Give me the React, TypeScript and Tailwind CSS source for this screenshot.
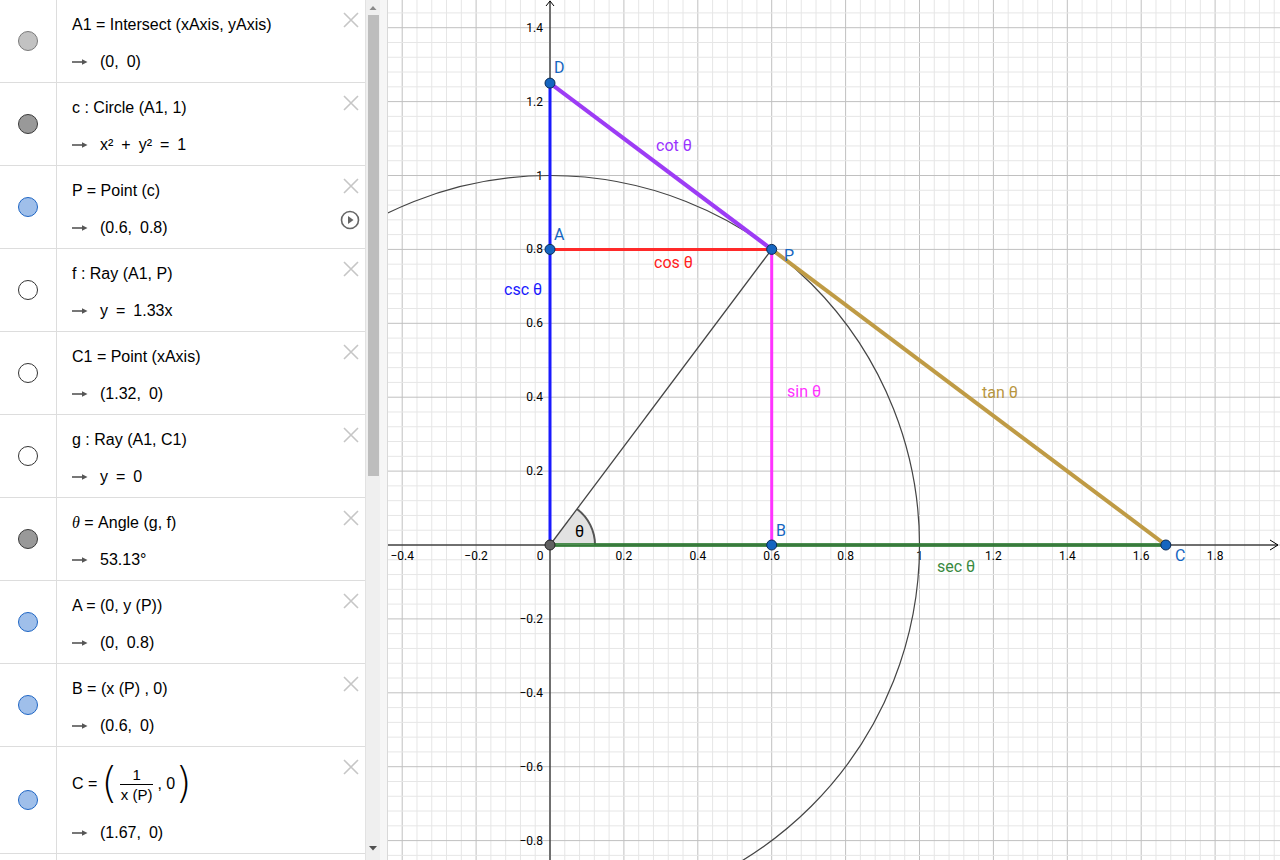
import type { ReactNode } from 'react';

const S = 369.5;
const OX = 162;
const OY = 545;
const X = (v: number) => OX + v * S;
const Y = (v: number) => OY - v * S;

const SANS = "'Liberation Sans', Arial, sans-serif";
const E = '\u2002';

type Dot = 'light' | 'dark' | 'blue' | 'empty';

const DOT_CLASS: Record<Dot, string> = {
  light: 'bg-[#c2c2c2] border-[#7a7a7a]',
  dark: 'bg-[#999999] border-[#3a3a3a]',
  blue: 'bg-[#9fbfea] border-[#1f66c4]',
  empty: 'bg-white border-[#333333]',
};

function CloseIcon() {
  return (
    <svg width="16" height="16" viewBox="0 0 16 16" className="absolute left-[343px] top-[12px]">
      <path d="M1 1 L15 15 M15 1 L1 15" stroke="#c6c6c6" strokeWidth="1.6" fill="none" />
    </svg>
  );
}

function PlayIcon() {
  return (
    <svg width="20" height="20" viewBox="0 0 20 20" className="absolute left-[340px] top-[44px]">
      <circle cx="10" cy="10" r="8.5" stroke="#666" strokeWidth="1.6" fill="none" />
      <path d="M8 6 L13.5 10 L8 14 Z" fill="#666" />
    </svg>
  );
}

function Arrow() {
  return (
    <svg width="16" height="10" viewBox="0 0 16 10" className="mr-[12px] shrink-0">
      <path d="M0 5 L12 5" stroke="#555" strokeWidth="1.6" />
      <path d="M10 2.2 L15.5 5 L10 7.8 Z" fill="#555" />
    </svg>
  );
}

function Row({ dot, def, val, tall, play }: {
  dot: Dot;
  def: ReactNode;
  val: ReactNode;
  tall?: boolean;
  play?: boolean;
}) {
  return (
    <div className={`relative flex shrink-0 border-b border-[#dddddd] ${tall ? 'h-[107px]' : 'h-[83px]'}`}>
      <div className="flex w-[57px] shrink-0 items-center justify-center border-r border-[#dddddd]">
        <div className={`h-[20px] w-[20px] rounded-full border ${DOT_CLASS[dot]}`} />
      </div>
      <div className="flex flex-col pl-[15px] text-[16px] text-black" style={{ fontFamily: SANS }}>
        {tall ? (
          <div className="mt-[14px] flex h-[46px] items-center">{def}</div>
        ) : (
          <div className="mt-[14px] flex h-[22px] items-center whitespace-pre leading-[22px]">{def}</div>
        )}
        <div className="mt-[15px] flex h-[22px] items-center whitespace-pre leading-[22px]">
          <Arrow />
          {val}
        </div>
      </div>
      <CloseIcon />
      {play && <PlayIcon />}
    </div>
  );
}

const Th = () => (
  <span className="italic" style={{ fontFamily: "'Liberation Serif', serif" }}>θ</span>
);

function AlgebraView() {
  return (
    <div className="flex h-full w-[365px] shrink-0 flex-col">
      <Row dot="light" def={<span>A1 = Intersect (xAxis, yAxis)</span>} val={<span>{`(0,${E}0)`}</span>} />
      <Row dot="dark" def={<span>c : Circle (A1, 1)</span>} val={<span>{`x²${E}+${E}y²${E}=${E}1`}</span>} />
      <Row dot="blue" def={<span>P = Point (c)</span>} val={<span>{`(0.6,${E}0.8)`}</span>} play />
      <Row dot="empty" def={<span>f : Ray (A1, P)</span>} val={<span>{`y${E}=${E}1.33x`}</span>} />
      <Row dot="empty" def={<span>C1 = Point (xAxis)</span>} val={<span>{`(1.32,${E}0)`}</span>} />
      <Row dot="empty" def={<span>g : Ray (A1, C1)</span>} val={<span>{`y${E}=${E}0`}</span>} />
      <Row dot="dark" def={<span><Th /> = Angle (g, f)</span>} val={<span>53.13°</span>} />
      <Row dot="blue" def={<span>A = (0, y (P))</span>} val={<span>{`(0,${E}0.8)`}</span>} />
      <Row dot="blue" def={<span>B = (x (P) , 0)</span>} val={<span>{`(0.6,${E}0)`}</span>} />
      <Row
        dot="blue"
        tall
        def={
          <span className="flex items-center">
            <span className="mr-[4px]">C =</span>
            <span className="text-[42px] font-extralight leading-none" style={{ fontFamily: "'DejaVu Sans', sans-serif" }}>(</span>
            <span className="mx-[2px] flex flex-col items-center text-[15px] leading-[19px]">
              <span>1</span>
              <span className="border-t border-black px-[1px]">x (P)</span>
            </span>
            <span className="ml-[2px]">, 0</span>
            <span className="text-[42px] font-extralight leading-none" style={{ fontFamily: "'DejaVu Sans', sans-serif" }}>)</span>
          </span>
        }
        val={<span>{`(1.67,${E}0)`}</span>}
      />
      <div className="flex flex-1">
        <div className="w-[57px] border-r border-[#dddddd]" />
      </div>
    </div>
  );
}

function Scrollbar() {
  return (
    <div className="flex h-full w-[15px] shrink-0 flex-col items-center border-l border-[#e2e2e2] bg-[#efefef]">
      <svg width="10" height="15" viewBox="0 0 10 15">
        <path d="M1.5 10 L5 6 L8.5 10 Z" fill="#8a8a8a" />
      </svg>
      <div className="h-[461px] w-[11px] bg-[#bdbdbd]" />
      <div className="flex-1" />
      <svg width="10" height="14" viewBox="0 0 10 14" className="mb-[4px]">
        <path d="M1 4 L5 8.5 L9 4 Z" fill="#505050" />
      </svg>
    </div>
  );
}

const fmt = (v: number) => {
  const s = Math.abs(v).toFixed(1).replace(/\.0$/, '');
  return v < 0 ? `−${s}` : s;
};

function GraphicsView() {
  const minor = S * 0.04;
  const xs: number[] = [];
  for (let k = -12; k <= 50; k++) xs.push(k);
  const ys: number[] = [];
  for (let k = -22; k <= 38; k++) ys.push(k);

  const xLabels = [-0.4, -0.2, 0.2, 0.4, 0.6, 0.8, 1, 1.2, 1.4, 1.6, 1.8];
  const yLabels = [1.4, 1.2, 1, 0.8, 0.6, 0.4, 0.2, -0.2, -0.4, -0.6, -0.8];

  const px = X(0.6), py = Y(0.8);
  const cx = X(1 / 0.6);
  const dy = Y(1.25);
  const ang = Math.atan2(0.8, 0.6);
  const r = 45;

  const font = "Roboto, 'Noto Sans', sans-serif";

  return (
    <svg width="892" height="860" viewBox="0 0 892 860" className="block shrink-0" style={{ fontFamily: font }}>
      <rect width="892" height="860" fill="#ffffff" />
      {xs.map(k => (
        <line key={`gx${k}`} x1={OX + k * minor} y1={0} x2={OX + k * minor} y2={860}
          stroke={k % 5 === 0 ? '#c0c0c0' : '#e6e6e6'} strokeWidth="1" />
      ))}
      {ys.map(k => (
        <line key={`gy${k}`} x1={0} y1={OY - k * minor} x2={892} y2={OY - k * minor}
          stroke={k % 5 === 0 ? '#c0c0c0' : '#e6e6e6'} strokeWidth="1" />
      ))}

      {/* axes */}
      <line x1={0} y1={OY} x2={890} y2={OY} stroke="#000" strokeWidth="1" />
      <path d={`M882 ${OY - 5} L890 ${OY} L882 ${OY + 5}`} stroke="#000" fill="none" strokeWidth="1" />
      <line x1={OX} y1={1} x2={OX} y2={860} stroke="#000" strokeWidth="1" />
      <path d={`M${OX - 4} 6 L${OX} 1 L${OX + 4} 6`} stroke="#000" fill="none" strokeWidth="1" />

      {xLabels.map(v => (
        <text key={`xl${v}`} x={X(v)} y={560} fontSize="12" textAnchor="middle" fill="#000">{fmt(v)}</text>
      ))}
      <text x={OX - 10} y={560} fontSize="12" textAnchor="middle" fill="#000">0</text>
      {yLabels.map(v => (
        <text key={`yl${v}`} x={OX - 7} y={Y(v) + 4} fontSize="12" textAnchor="end" fill="#000">{fmt(v)}</text>
      ))}

      {/* unit circle */}
      <circle cx={OX} cy={OY} r={S} fill="none" stroke="#444" strokeWidth="1.2" />

      {/* angle sector */}
      <path
        d={`M${OX} ${OY} L${OX + r} ${OY} A${r} ${r} 0 0 0 ${OX + r * Math.cos(ang)} ${OY - r * Math.sin(ang)} Z`}
        fill="#e2e2e2" stroke="none"
      />
      <path
        d={`M${OX + r} ${OY} A${r} ${r} 0 0 0 ${OX + r * Math.cos(ang)} ${OY - r * Math.sin(ang)}`}
        fill="none" stroke="#555" strokeWidth="2"
      />
      <text x={187} y={537} fontSize="16" fill="#000">θ</text>

      {/* segment origin-P */}
      <line x1={OX} y1={OY} x2={px} y2={py} stroke="#444" strokeWidth="1.3" />

      {/* sec */}
      <line x1={OX} y1={OY} x2={cx} y2={OY} stroke="#2f7d34" strokeWidth="4" strokeOpacity="0.85" />
      {/* tan */}
      <line x1={px} y1={py} x2={cx} y2={OY} stroke="#bf9b45" strokeWidth="4" />
      {/* sin */}
      <line x1={px} y1={py} x2={px} y2={OY} stroke="#ff33ff" strokeWidth="3" />
      {/* cos */}
      <line x1={OX} y1={py} x2={px} y2={py} stroke="#ff2a2a" strokeWidth="3" />
      {/* csc */}
      <line x1={OX} y1={OY} x2={OX} y2={dy} stroke="#1a1aff" strokeWidth="3" />
      {/* cot */}
      <line x1={OX} y1={dy} x2={px} y2={py} stroke="#9d3cf5" strokeWidth="4" />

      {/* line labels */}
      <text x={268} y={151} fontSize="16" fill="#9933ff">cot θ</text>
      <text x={266} y={268} fontSize="16" fill="#ff2020">cos θ</text>
      <text x={116} y={295} fontSize="16" fill="#1a1aff">csc θ</text>
      <text x={399} y={397} fontSize="16" fill="#ff33ff">sin θ</text>
      <text x={594} y={398} fontSize="16" fill="#b8963f">tan θ</text>
      <text x={549} y={572} fontSize="16" fill="#3a8a3f">sec θ</text>

      {/* points */}
      <circle cx={OX} cy={OY} r="5" fill="#616161" stroke="#222" strokeWidth="1" />
      {[[OX, dy], [OX, py], [px, py], [px, OY], [cx, OY]].map(([a, b], i) => (
        <circle key={`pt${i}`} cx={a} cy={b} r="5" fill="#1565c0" stroke="#0a2a55" strokeWidth="1" />
      ))}

      {/* point labels */}
      <text x={166} y={73} fontSize="16" fill="#1565c0">D</text>
      <text x={166} y={240} fontSize="16" fill="#1565c0">A</text>
      <text x={396} y={261} fontSize="16" fill="#1565c0">P</text>
      <text x={388} y={536} fontSize="16" fill="#1565c0">B</text>
      <text x={787} y={561} fontSize="16" fill="#1565c0">C</text>
    </svg>
  );
}

export default function App() {
  return (
    <div className="flex h-[860px] w-[1280px] overflow-hidden bg-white">
      <div className="flex h-full w-[388px] shrink-0">
        <AlgebraView />
        <Scrollbar />
        <div className="h-full w-[8px] border-r border-[#d9d9d9] bg-[#f6f6f6]" />
      </div>
      <GraphicsView />
    </div>
  );
}
